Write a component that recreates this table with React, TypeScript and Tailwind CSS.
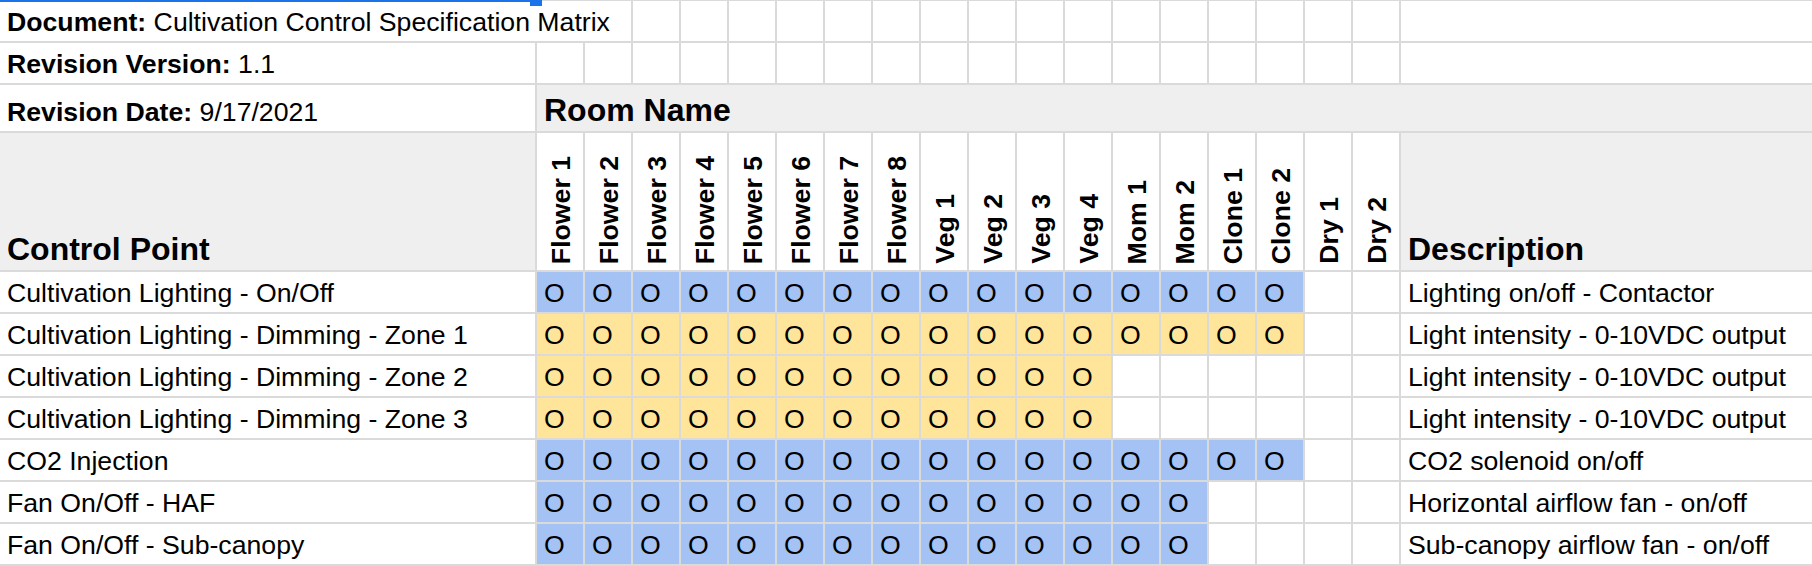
const rooms = [
  'Flower 1', 'Flower 2', 'Flower 3', 'Flower 4', 'Flower 5', 'Flower 6', 'Flower 7', 'Flower 8',
  'Veg 1', 'Veg 2', 'Veg 3', 'Veg 4', 'Mom 1', 'Mom 2', 'Clone 1', 'Clone 2', 'Dry 1', 'Dry 2',
];

type Row = { label: string; fill: string; count: number; desc: string };

const BLUE = 'bg-[#a4c2f4]';
const YELLOW = 'bg-[#ffe599]';

const rows: Row[] = [
  { label: 'Cultivation Lighting - On/Off', fill: BLUE, count: 16, desc: 'Lighting on/off - Contactor' },
  { label: 'Cultivation Lighting - Dimming - Zone 1', fill: YELLOW, count: 16, desc: 'Light intensity - 0-10VDC output' },
  { label: 'Cultivation Lighting - Dimming - Zone 2', fill: YELLOW, count: 12, desc: 'Light intensity - 0-10VDC output' },
  { label: 'Cultivation Lighting - Dimming - Zone 3', fill: YELLOW, count: 12, desc: 'Light intensity - 0-10VDC output' },
  { label: 'CO2 Injection', fill: BLUE, count: 16, desc: 'CO2 solenoid on/off' },
  { label: 'Fan On/Off - HAF', fill: BLUE, count: 14, desc: 'Horizontal airflow fan - on/off' },
  { label: 'Fan On/Off - Sub-canopy', fill: BLUE, count: 14, desc: 'Sub-canopy airflow fan - on/off' },
];

// base cell: bottom aligned like a sheet cell
const cell = 'flex items-end overflow-hidden whitespace-nowrap pl-[7px] pb-[5px] leading-none';
const blanks = (n: number, key: string) =>
  Array.from({ length: n }, (_, i) => <div key={`${key}-${i}`} className="bg-white" />);

export default function App() {
  return (
    <div className="relative w-[1812px] h-[566px] overflow-hidden bg-white text-black font-['Liberation_Sans',Arial,sans-serif] text-[26.67px]">
      <div className="grid grid-cols-[535px_repeat(18,46px)_1fr] grid-rows-[40px_40px_46px_137px_repeat(7,40px)] gap-[2px] bg-[#dadada] pt-[1px] pb-[2px]">
        {/* row 1 */}
        <div className={`${cell} col-span-3 bg-white`}>
          <span className="font-bold">Document:</span>
          <span className="whitespace-pre"> Cultivation Control Specification Matrix</span>
        </div>
        {blanks(17, 'r1')}

        {/* row 2 */}
        <div className={`${cell} bg-white`}>
          <span className="font-bold">Revision Version:</span>
          <span className="whitespace-pre"> 1.1</span>
        </div>
        {blanks(19, 'r2')}

        {/* row 3 */}
        <div className={`${cell} bg-white`}>
          <span className="font-bold">Revision Date:</span>
          <span className="whitespace-pre"> 9/17/2021</span>
        </div>
        <div className={`${cell} col-span-19 bg-[#efefef] text-[32px] font-bold`}>Room Name</div>

        {/* header */}
        <div className={`${cell} bg-[#efefef] text-[32px] font-bold`}>Control Point</div>
        {rooms.map((r) => (
          <div key={r} className="flex items-end justify-center bg-white pb-[6px] pl-[2px]">
            <span className="[writing-mode:vertical-rl] rotate-180 whitespace-nowrap font-bold leading-none">{r}</span>
          </div>
        ))}
        <div className={`${cell} bg-[#efefef] text-[32px] font-bold`}>Description</div>

        {/* data rows */}
        {rows.map((row) => (
          <div key={row.label} className="contents">
            <div className={`${cell} bg-white`}>{row.label}</div>
            {rooms.map((r, i) =>
              i < row.count ? (
                <div key={r} className={`${cell} ${row.fill}`}>O</div>
              ) : (
                <div key={r} className="bg-white" />
              )
            )}
            <div className={`${cell} bg-white`}>{row.desc}</div>
          </div>
        ))}
      </div>

      {/* selection border of the cell above, with fill handle */}
      <div className="absolute left-0 top-0 h-[2px] w-[534px] bg-[#1a73e8]" />
      <div className="absolute left-[530px] top-0 h-[6px] w-[12px] bg-[#1a73e8]" />
    </div>
  );
}
